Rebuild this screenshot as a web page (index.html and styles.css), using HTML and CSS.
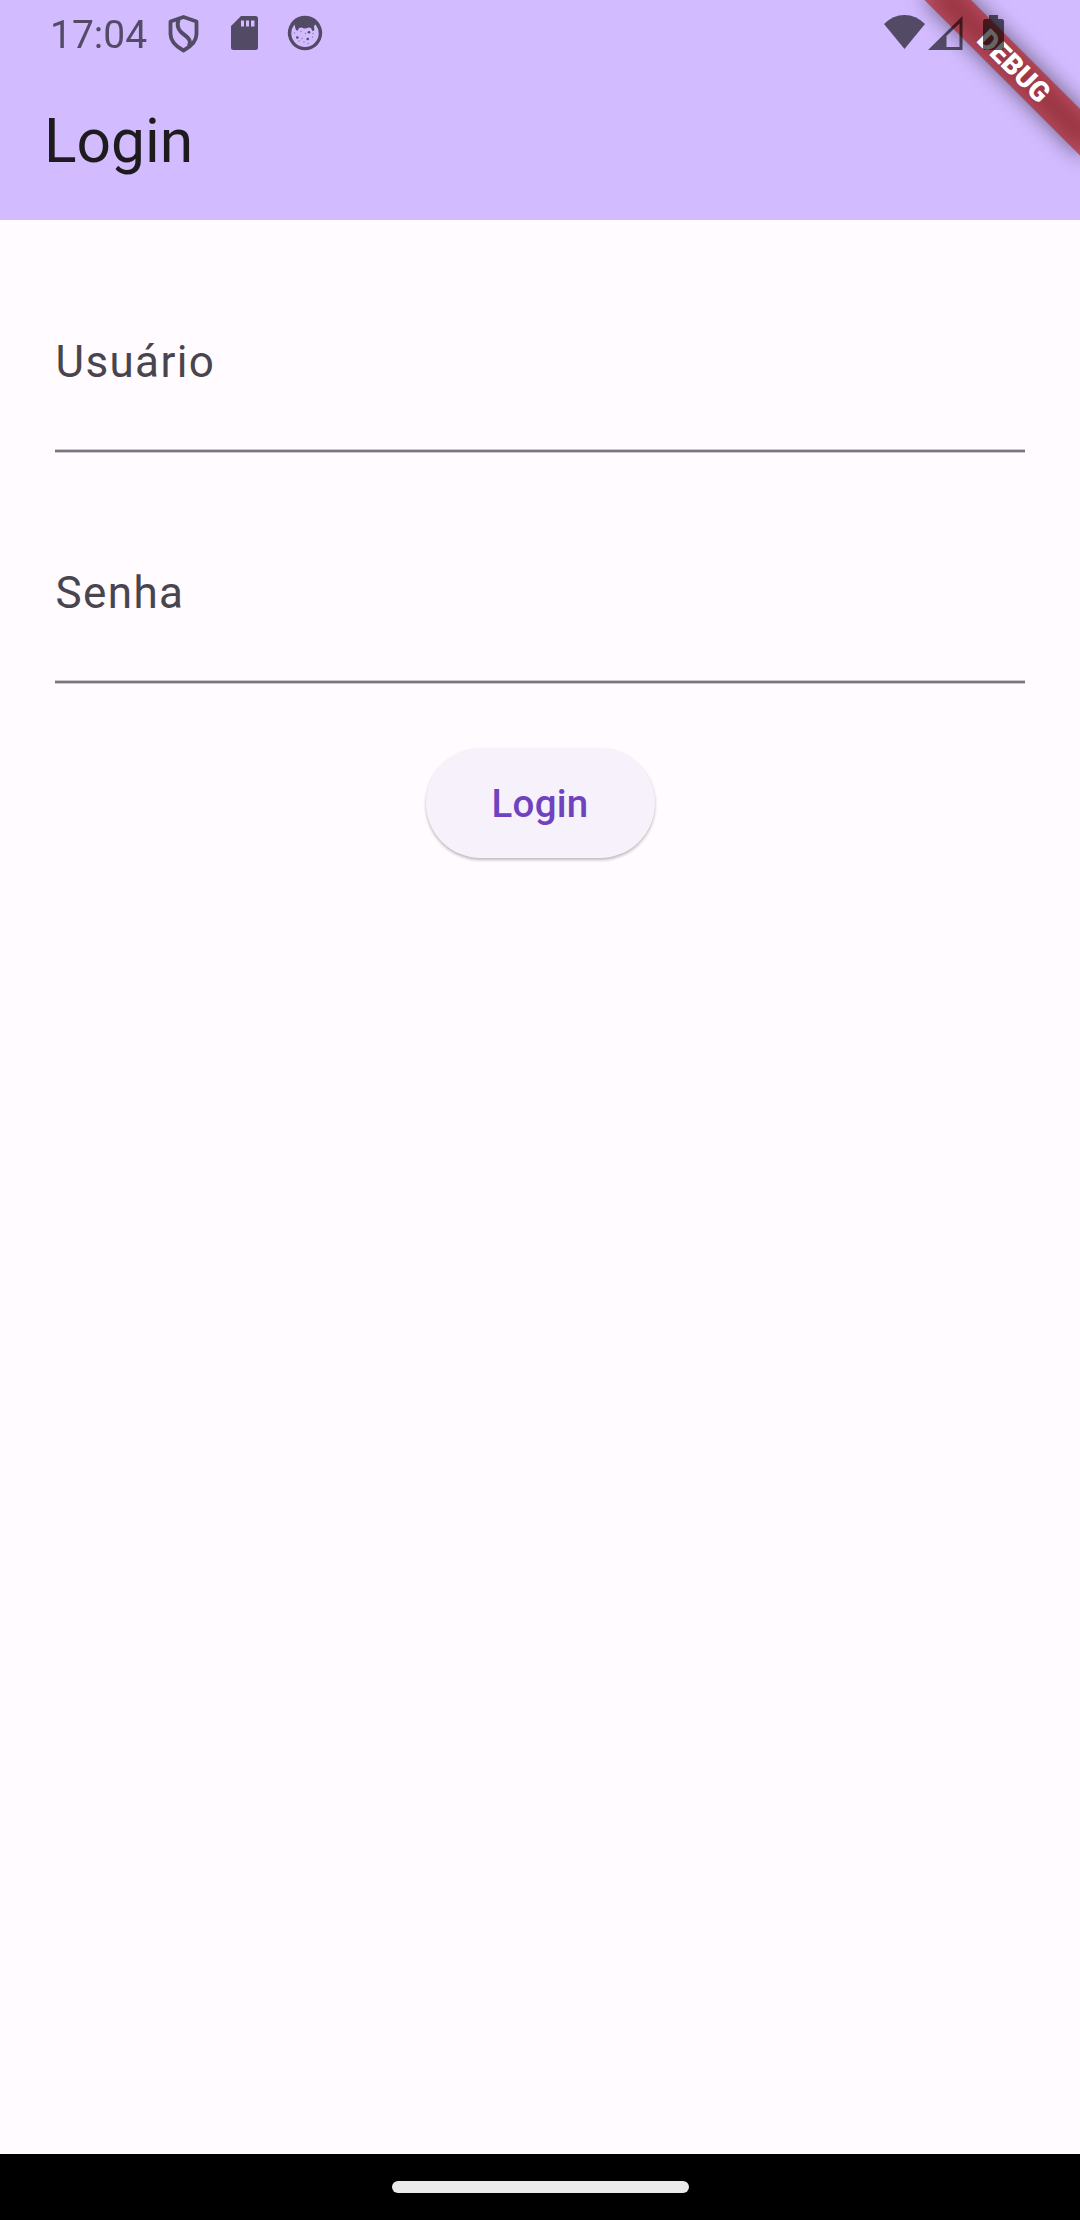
FILE: index.html
```html
<!DOCTYPE html>
<html lang="pt-BR">
<head>
<meta charset="utf-8">
<title>Login</title>
<link rel="stylesheet" href="styles.css">
</head>
<body>
<div class="screen">
  <header class="app-bar">
    <div class="status-bar">
      <span class="clock">17:04</span>
      <svg class="shield" width="32" height="38" viewBox="0 0 32 38" fill="none" stroke="currentColor" stroke-linejoin="round"><path d="M15.500 2 28.500 6.500V19C28.500 26 23 31.500 15.500 35.500 8 31.500 2.500 26 2.500 19V6.500Z" stroke-width="3.800"/><path d="M10.500 4.500C9 9 9.500 13.500 13 17 16.500 20.500 22 22.500 22 27.500L21 31" stroke-width="4"/></svg>
      <svg class="sd-card" width="27" height="34" viewBox="0 0 27 34" fill="currentColor" fill-rule="evenodd"><path d="M10 0H24.500Q27 0 27 2.500V31.500Q27 34 24.500 34H2.500Q0 34 0 31.500V10ZM10 4.500V10.500H13V4.500ZM15 4.500V10.500H18V4.500ZM20 4.500V10.500H23.500V4.500Z"/></svg>
      <svg class="face" width="36" height="36" viewBox="0 0 36 36"><path d="M18 .8A17.200 17.200 0 1 1 18 35.200 17.200 17.200 0 1 1 18 .8ZM7.500 9.500A13.700 13.700 0 1 0 28.500 9.500L27 11 27.300 15.500 25.300 16 24 13 21.500 12.500Q18 14.500 14.500 12.500L12 13 10.500 16 8.700 14.500Z" fill="currentColor" fill-rule="evenodd"/><g fill="currentColor"><circle cx="22" cy="17.200" r="1.300"/><circle cx="10.300" cy="22.500" r="1.300"/><circle cx="20.700" cy="24" r="1.300"/><g opacity=".5"><circle cx="14" cy="16.500" r=".8"/><circle cx="18.500" cy="18.500" r=".8"/><circle cx="25.500" cy="22" r=".8"/><circle cx="15" cy="23.500" r=".8"/><circle cx="17" cy="27" r=".8"/><circle cx="21" cy="28.500" r=".8"/><circle cx="26" cy="18.500" r=".8"/><circle cx="12" cy="26" r=".8"/><circle cx="7.500" cy="18" r=".8"/></g></g></svg>
      <svg class="wifi" width="41" height="34" viewBox="0 0 41 34" fill="currentColor"><path d="M0 9Q9 0 20.500 0T41 9L20.500 34Z"/></svg>
      <svg class="signal" width="35" height="34" viewBox="0 0 35 34" fill="currentColor" fill-rule="evenodd"><path d="M0 34 34.500 0V34ZM18.500 20V31H31.500V7.500Z"/></svg>
      <svg class="battery" width="21" height="35" viewBox="0 0 21 35" fill="currentColor"><path d="M6 0H15V4H19.500L21 5.500V33.500L19.500 35H1.500L0 33.500V5.500L1.500 4H6Z"/></svg>
    </div>
    <h1 class="title">Login</h1>
  </header>
  <main class="form">
    <div class="field"><span class="label">Usuário</span></div>
    <div class="field"><span class="label">Senha</span></div>
    <button class="login" type="button">Login</button>
  </main>
  <footer class="nav-bar"><div class="handle"></div></footer>
  <div class="banner"><div class="ribbon">DEBUG</div></div>
</div>
</body>
</html>
```
FILE: styles.css
```css
* { box-sizing: border-box; }

body {
  margin: 0;
  font-family: Roboto, sans-serif;
}

.screen {
  position: relative;
  display: flex;
  flex-direction: column;
  width: 1080px;
  height: 2220px;
  overflow: hidden;
  background: #fffbff;
}

.app-bar {
  display: flex;
  flex-direction: column;
  height: 220px;
  background: #d2bbff;
}

.status-bar {
  position: relative;
  z-index: 2;
  display: flex;
  align-items: flex-start;
  height: 66px;
  padding: 15px 76px 0 50px;
  color: #000;
  opacity: 0.6;
}

.status-bar svg { display: block; flex: none; }

.clock {
  width: 118px;
  margin-top: -2px;
  font-size: 39px;
  line-height: 44px;
}

.sd-card { margin: 1px 0 0 31px; }
.face { margin-left: 29px; }
.wifi { margin-left: auto; }
.signal { margin: 1px 0 0 3px; }
.battery { margin-left: 20px; }

.title {
  margin: 0;
  padding-left: 44px;
  color: #1d1b1e;
  font-size: 60.5px;
  font-weight: 400;
  line-height: 151px;
}

.form {
  display: flex;
  flex: 1;
  flex-direction: column;
  align-items: center;
  padding-top: 55px;
}

.field {
  display: flex;
  align-items: flex-end;
  width: 970px;
  height: 178px;
  margin-bottom: 53px;
  padding: 0 0 61px 0.5px;
  background: linear-gradient(#cbc7ce 1px, #7b757f 1px 3px, #cbc7ce 3px) bottom / 100% 4px no-repeat;
}

.label {
  color: #49454e;
  font-size: 44px;
  letter-spacing: 1.375px;
  line-height: 60px;
}

.login {
  width: 229px;
  height: 110px;
  margin-top: 11px;
  padding: 0;
  border: 0;
  border-radius: 55px;
  background: #f6f1fb;
  box-shadow: 0 2px 3px rgba(0, 0, 0, 0.22), 0 2px 4px rgba(0, 0, 0, 0.06);
  color: #6f43c0;
  font: 500 38.5px/55px Roboto, sans-serif;
  letter-spacing: 0.275px;
}

.nav-bar {
  display: flex;
  justify-content: center;
  height: 66px;
  padding-top: 27px;
  background: #000;
}

.handle {
  width: 297px;
  height: 12px;
  border-radius: 6px;
  background: #ebebeb;
}

.banner {
  position: absolute;
  z-index: 1;
  top: 0;
  right: -110px;
  width: 220px;
  height: 110px;
  padding-top: 77px;
  transform: rotate(45deg);
  transform-origin: 50% 0;
}

.ribbon {
  position: relative;
  height: 33px;
  background: rgba(183, 28, 28, 0.63);
  color: #fff;
  font-size: 28px;
  font-weight: 900;
  line-height: 33px;
  text-align: center;
}

.ribbon::before {
  position: absolute;
  z-index: -1;
  inset: 0;
  background: rgba(0, 0, 0, 0.5);
  content: "";
  filter: blur(10.9px);
}
```
